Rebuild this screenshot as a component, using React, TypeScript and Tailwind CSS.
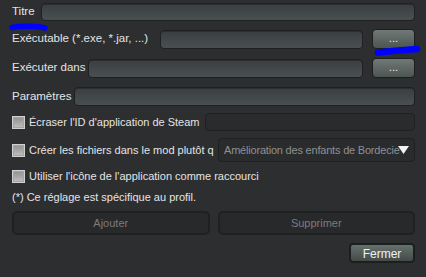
const field =
  "rounded-[4px] border border-[#1e2022] bg-gradient-to-b from-[#3a3e40] to-[#4a5052] shadow-[inset_0_1px_0_rgba(0,0,0,0.25)]";
const toolBtn =
  "flex items-center justify-center rounded-[4px] border border-[#1c1e1f] bg-gradient-to-b from-[#6f7976] to-[#4c5552] text-[#e8eef0]";

function Checkbox() {
  return (
    <span className="block h-[13px] w-[13px] shrink-0 border border-[#d0d0d0] bg-gradient-to-b from-[#909090] to-[#c0c0c0] shadow-[inset_0_0_0_1px_#a4a4a4]" />
  );
}

function Label({ text, width }: { text: string; width: string }) {
  return <span className={`shrink-0 whitespace-nowrap ${width}`}>{text}</span>;
}

export default function App() {
  return (
    <div
      className="relative flex h-[277px] w-[426px] flex-col overflow-hidden bg-[#2d2e30] pl-[12px] pr-[11px] pt-[3px] text-[11px] text-[#e4e4e4]"
      style={{ fontFamily: '"Liberation Sans", Arial, sans-serif' }}
    >
      <div className="flex h-[18px] items-center text-[11.5px]">
        <Label text="Titre" width="w-[29px]" />
        <div className={`h-full flex-1 ${field}`} />
      </div>

      <div className="mt-[8px] flex h-[20px] items-center text-[11.5px]">
        <Label text="Exécutable (*.exe, *.jar, ...)" width="w-[148px]" />
        <div className={`h-[19px] flex-1 ${field}`} />
        <button className={`ml-[9px] h-full w-[43px] ${toolBtn}`}>...</button>
      </div>

      <div className="mt-[9px] flex h-[20px] items-center text-[11.5px]">
        <Label text="Exécuter dans" width="w-[76px]" />
        <div className={`h-[19px] flex-1 ${field}`} />
        <button className={`ml-[9px] h-full w-[43px] ${toolBtn}`}>...</button>
      </div>

      <div className="mt-[9px] flex h-[19px] items-center text-[11.5px]">
        <Label text="Paramètres" width="w-[62px]" />
        <div className={`h-full flex-1 ${field}`} />
      </div>

      <div className="mt-[7px] flex h-[18px] items-center">
        <Checkbox />
        <span className="ml-[4px] w-[176px] shrink-0 overflow-hidden whitespace-nowrap">Écraser l'ID d'application de Steam</span>
        <div className="h-full flex-1 rounded-[4px] border border-[#1e2022] bg-[#2a2b2d]" />
      </div>

      <div className="mt-[7px] flex h-[24px] items-center">
        <Checkbox />
        <span className="ml-[4px] w-[189px] shrink-0 overflow-hidden whitespace-nowrap">Créer les fichiers dans le mod plutôt q</span>
        <div className="flex h-full min-w-0 flex-1 items-center rounded-[4px] border border-[#1e2022] bg-[#2a2b2d] pl-[5px] pr-[5px]">
          <span className="min-w-0 flex-1 whitespace-nowrap tracking-[-0.2px] text-[#8e9092]">
            Amélioration des enfants de Bordecie
          </span>
          <svg width="11" height="8" viewBox="0 0 11 8" className="ml-[2px] shrink-0">
            <path d="M0 0h11L5.5 8z" fill="#f2f2f2" />
          </svg>
        </div>
      </div>

      <div className="mt-[8px] flex h-[13px] items-center">
        <Checkbox />
        <span className="ml-[4px] whitespace-nowrap">Utiliser l'icône de l'application comme raccourci</span>
      </div>

      <div className="mt-[8px] flex h-[12px] items-center whitespace-nowrap">
        (*) Ce réglage est spécifique au profil.
      </div>

      <div className="mt-[8px] flex h-[24px] gap-[8px]">
        <button className="flex-1 rounded-[5px] border-2 border-[#1f2022] bg-[#28292b] text-[#7a7c7e]">Ajouter</button>
        <button className="flex-1 rounded-[5px] border-2 border-[#1f2022] bg-[#28292b] text-[#7a7c7e]">Supprimer</button>
      </div>

      <div className="mt-[8px] flex h-[20px] justify-end">
        <button className="w-[66px] rounded-[4px] border-2 border-[#1c1e1f] bg-gradient-to-b from-[#65716d] to-[#434b49] text-[12px] text-[#eef2f4]">
          Fermer
        </button>
      </div>

      <svg className="pointer-events-none absolute left-0 top-0" width="426" height="277">
        <path d="M12 27.5 C20 25.5, 38 26, 45 28" stroke="#0000ff" strokeWidth="5.5" strokeLinecap="round" fill="none" />
        <path d="M378 52.5 C390 51, 405 50, 417 49" stroke="#0000ff" strokeWidth="6.5" strokeLinecap="round" fill="none" />
      </svg>
    </div>
  );
}
